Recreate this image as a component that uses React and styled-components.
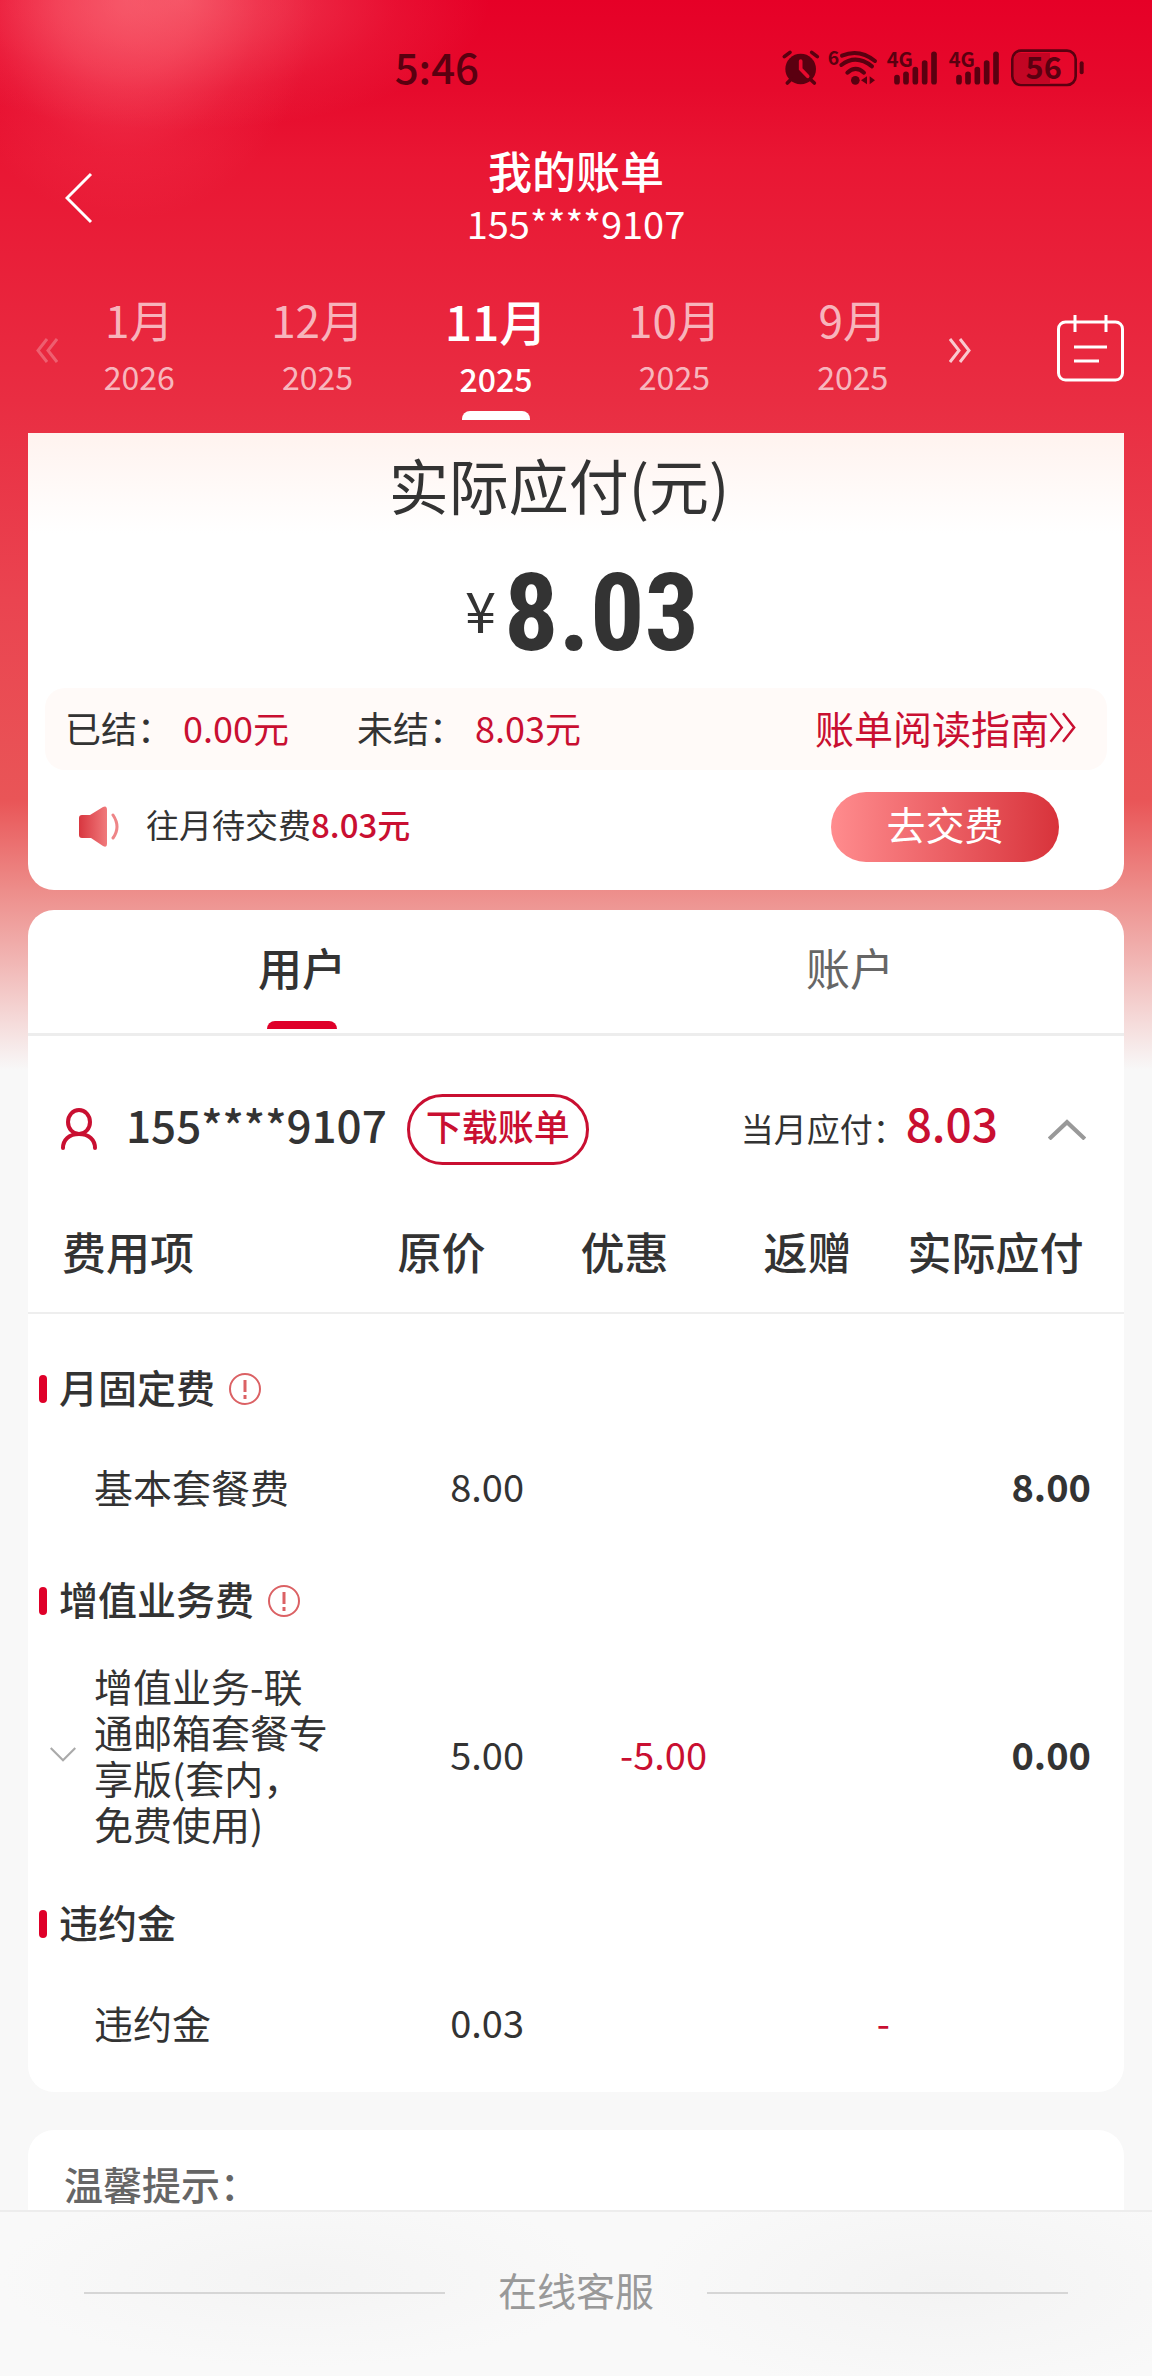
import React, { useState } from 'react';
import styled, { createGlobalStyle } from 'styled-components';

const color = {
  red: '#c90f31',
  brand: '#df0029',
  text: '#333333',
  muted: '#666666',
  hint: '#999999',
  line: '#eeeeee',
  page: '#f8f8f8',
  status: '#5a0010',
};

const GlobalStyle = createGlobalStyle`
  * {
    box-sizing: border-box;
  }

  body {
    margin: 0;
    color: ${color.text};
    background: ${color.page};
    font-family: 'Noto Sans CJK SC', 'Noto Sans', sans-serif;
    font-size: 39px;
  }

  button {
    padding: 0;
    border: 0;
    background: none;
    color: inherit;
    font: inherit;
    cursor: pointer;
  }

  a {
    color: inherit;
    text-decoration: none;
  }

  svg {
    display: block;
  }
`;

const Page = styled.div`
  display: flex;
  flex-direction: column;
  min-height: 100vh;
  background:
    radial-gradient(
      ellipse 310px 130px at 180px 0,
      rgba(255, 150, 150, 0.4) 0,
      rgba(255, 145, 145, 0.28) 35%,
      rgba(255, 140, 140, 0.1) 70%,
      rgba(255, 140, 140, 0) 100%
    ) no-repeat,
    radial-gradient(
      ellipse 190px 220px at 125px 0,
      rgba(255, 110, 125, 0.5) 0,
      rgba(255, 105, 120, 0.38) 35%,
      rgba(255, 100, 115, 0.12) 70%,
      rgba(255, 95, 110, 0) 100%
    ) no-repeat,
    linear-gradient(
      180deg,
      #e60027 0,
      #e60a2c 90px,
      #e91633 160px,
      #e92d42 400px,
      #ea4450 600px,
      #e95557 800px,
      #ed8d8a 890px,
      #f1b5b3 960px,
      #f8f8f8 1070px
    ) no-repeat;
`;

const StatusBar = styled.div`
  display: flex;
  align-items: center;
  justify-content: space-between;
  height: 134px;
  padding: 0 65px 0 34%;
  color: ${color.status};
  font-size: 42px;
  font-weight: 500;

  span {
    padding: 0 0 4px 3px;
  }
`;

const Header = styled.header`
  display: grid;
  grid-template-columns: 102px 1fr 102px;
  align-items: center;
  padding: 6px 28px 0;
  color: white;
  text-align: center;
`;

const BackButton = styled.button`
  display: flex;
  justify-content: center;
  padding-top: 10px;
`;

const Title = styled.h1`
  margin: 0;
  font-size: 44px;
  font-weight: 500;
  line-height: 60px;
`;

const HeaderPhone = styled.div`
  font-size: 38px;
  line-height: 46px;
`;

const MonthBar = styled.nav`
  display: flex;
  align-items: flex-start;
  padding: 46px 28px 13px 36px;
  color: white;
`;

const ArrowButton = styled.button`
  display: flex;
  align-items: center;
  height: 116px;
  opacity: ${({ $dim }) => ($dim ? 0.25 : 0.75)};
  margin: ${({ $dim }) => ($dim ? '0 -8px 0 0' : '0 86px 0 7px')};
`;

const CalendarButton = styled.button`
  display: flex;
  align-items: center;
  height: 112px;
`;

const Months = styled.div`
  display: grid;
  grid-template-columns: repeat(5, 1fr);
  flex: 1;
`;

const Month = styled.button`
  display: flex;
  flex-direction: column;
  align-items: center;
  height: 128px;
  color: ${({ $active }) => ($active ? 'white' : 'rgba(255, 255, 255, 0.68)')};
  font-size: ${({ $active }) => ($active ? '48px' : '44px')};
  font-weight: ${({ $active }) => ($active ? 500 : 400)};
  line-height: ${({ $active }) => ($active ? '56px' : '54px')};

  small {
    font-size: 32px;
    line-height: 60px;
  }

  &::after {
    content: '';
    width: 68px;
    height: 9px;
    margin-top: auto;
    border-radius: 8px 8px 0 0;
    background: ${({ $active }) => ($active ? 'white' : 'transparent')};
  }
`;

const Main = styled.main`
  display: flex;
  flex: 1;
  flex-direction: column;
  padding: 0 28px;
`;

const Card = styled.section`
  border-radius: 26px;
  background: white;
`;

const SummaryCard = styled(Card)`
  margin-bottom: 20px;
  padding-top: 12px;
  border-radius: 0 0 26px 26px;
  background: linear-gradient(180deg, #fff3ef 0, #ffffff 100px);
`;

const SummaryTitle = styled.h2`
  margin: 0;
  padding-right: 34px;
  font-size: 60px;
  font-weight: 400;
  line-height: 78px;
  text-align: center;
`;

const Amount = styled.div`
  display: flex;
  align-items: center;
  justify-content: center;
  gap: 8px;
  height: 165px;
  padding: 14px 0 0 12px;
  font-size: 56px;

  span {
    padding-bottom: 8px;
  }

  strong {
    font-family: 'Roboto Condensed', 'Open Sans Condensed', 'Noto Sans Condensed', 'Roboto', sans-serif;
    font-size: 108px;
    line-height: 120px;
  }
`;

const SettleBar = styled.div`
  display: flex;
  align-items: center;
  justify-content: space-between;
  height: 82px;
  margin: 0 17px;
  padding: 0 30px 4px 20px;
  border-radius: 20px;
  background: #fffaf8;
  font-size: 36px;
`;

const SettleItems = styled.div`
  display: flex;
  gap: 68px;
`;

const Red = styled.span`
  color: ${color.red};
`;

const Colon = styled.span`
  padding-right: 10px;
`;

const GuideLink = styled.a`
  display: flex;
  align-items: center;
  color: ${color.red};
  font-size: 39px;
`;

const NoticeRow = styled.div`
  display: flex;
  align-items: center;
  padding: 22px 65px 28px 51px;
  font-size: 33px;

  ${Red} {
    font-weight: 500;
  }
`;

const NoticeText = styled.p`
  flex: 1;
  margin: 0 0 0 27px;
  padding-bottom: 6px;
`;

const PayButton = styled.button`
  width: 228px;
  height: 70px;
  padding-bottom: 8px;
  border-radius: 35px;
  background: linear-gradient(90deg, #ff8c8e, #d8333b);
  color: white;
  font-size: 39px;
`;

const BillCard = styled(Card)`
  margin-bottom: 38px;
  overflow: hidden;
`;

const Tabs = styled.div`
  display: grid;
  grid-template-columns: 1fr 1fr;
  border-bottom: 3px solid #ededed;
`;

const Tab = styled.button`
  position: relative;
  height: 123px;
  padding-bottom: 10px;
  color: ${({ $active }) => ($active ? color.text : color.muted)};
  font-size: 44px;
  font-weight: ${({ $active }) => ($active ? 500 : 400)};

  &::after {
    content: '';
    position: absolute;
    bottom: 4px;
    left: calc(50% - 35px);
    width: 70px;
    height: 8px;
    border-radius: 8px 8px 0 0;
    background: ${({ $active }) => ($active ? color.brand : 'transparent')};
  }
`;

const UserRow = styled.div`
  display: flex;
  align-items: center;
  padding: 56px 38px 30px 32px;
`;

const UserPhone = styled.div`
  margin: 0 20px 0 28px;
  padding-bottom: 10px;
  font-size: 44px;
  font-weight: 500;
`;

const DownloadButton = styled.button`
  width: 182px;
  height: 71px;
  padding-bottom: 8px;
  border: 3px solid ${color.red};
  border-radius: 36px;
  color: ${color.red};
  font-size: 36px;
  font-weight: 500;
`;

const MonthDue = styled.div`
  display: flex;
  align-items: center;
  margin-left: auto;
  padding-bottom: 2px;
  font-size: 33px;

  strong {
    padding-bottom: 12px;
    color: ${color.red};
    font-size: 46px;
    font-weight: 500;
    line-height: 60px;
  }
`;

const CollapseButton = styled.button`
  margin-left: 50px;
`;

const FeeTable = styled.table`
  width: 100%;
  table-layout: fixed;
  border-collapse: collapse;
  line-height: 46px;

  col {
    width: 183px;
  }

  col:first-child {
    width: auto;
  }

  col:last-child {
    width: 225px;
  }

  thead th {
    height: 117px;
    padding: 0 0 6px;
    border-bottom: 2px solid ${color.line};
    font-size: 44px;
    font-weight: 500;
    white-space: nowrap;
  }

  thead th:first-child {
    padding-left: 34px;
    text-align: left;
  }

  thead th:last-child {
    padding-right: 32px;
  }

  tbody:first-of-type th {
    height: 120px;
    padding-top: 30px;
  }
`;

const SectionCell = styled.th`
  height: 90px;
  padding: 0 11px;
  font-weight: 500;
  text-align: left;
`;

const SectionTitle = styled.div`
  display: flex;
  align-items: center;

  &::before {
    content: '';
    width: 8px;
    height: 28px;
    margin-right: 12px;
    border-radius: 4px;
    background: ${color.brand};
  }

  span {
    padding-bottom: 6px;
  }

  svg {
    margin-left: 13px;
  }
`;

const Cell = styled.td`
  height: 123px;
  padding: 16px 9px 33px 0;
  color: ${({ $red }) => ($red ? color.red : color.text)};
  font-size: 38px;
  text-align: right;

  &:last-child {
    padding-right: 33px;
    font-weight: 700;
  }
`;

const NameCell = styled(Cell)`
  padding-left: 22px;
  font-size: 39px;
  text-align: left;
`;

const FeeName = styled.div`
  display: grid;
  grid-template-columns: 44px 236px;
  align-items: center;
`;

const TipsCard = styled(Card)`
  flex: 1;
  padding: 27px 36px 180px;
  border-radius: 26px 26px 0 0;
  color: ${color.muted};
  font-weight: 500;
  line-height: 52px;
`;

const Footer = styled.footer`
  position: fixed;
  right: 0;
  bottom: 0;
  left: 0;
  display: flex;
  align-items: center;
  gap: 53px;
  height: 166px;
  padding: 0 84px 2px;
  border-top: 2px solid #ededed;
  background:
    radial-gradient(ellipse 300px 90px at 26% 40%, #f4f4f4, rgba(244, 244, 244, 0)),
    radial-gradient(ellipse 300px 110px at 82% 45%, #f3f3f3, rgba(243, 243, 243, 0)),
    #f9f9f9;
  color: ${color.hint};

  a {
    padding-bottom: 8px;
  }

  &::before,
  &::after {
    content: '';
    flex: 1;
    height: 2px;
    background: #d6d6d6;
  }
`;

const signalBars = [
  [411, 134, 162],
  [438, 124, 162],
  [466, 110, 162],
  [494, 90, 162],
  [522, 64, 162],
];

function Signal({ x }) {
  return (
    <g transform={`translate(${x} 0)`}>
      <text x="380" y="110" fontSize="60" fontWeight="700" fontFamily="Noto Sans CJK SC, sans-serif">4G</text>
      <g stroke="currentColor" strokeWidth="17" strokeLinecap="round">
        {signalBars.map(([bx, top, bottom]) => (
          <path key={bx} d={`M${bx} ${top + 8}V${bottom - 8}`} />
        ))}
      </g>
    </g>
  );
}

function StatusIcons() {
  return (
    <svg width="307" height="80" viewBox="60 -10 921 240" fill="currentColor">
      <circle cx="122" cy="116" r="46" />
      <path d="M73 79 90 66M172 79 155 66M94 146 82 158M150 146 163 158" stroke="currentColor" strokeWidth="11" strokeLinecap="round" />
      <path d="M122 92V116L143 138" fill="none" stroke="#e8092d" strokeWidth="11" strokeLinecap="round" />
      <text x="203" y="105" fontSize="58" fontWeight="700" fontFamily="Noto Sans CJK SC, sans-serif">6</text>
      <g fill="none" stroke="currentColor" strokeWidth="12" strokeLinecap="round">
        <path d="M246 76Q298 54 345 92M244 104Q288 70 336 108M262 127Q287 104 312 127" />
      </g>
      <circle cx="286" cy="150" r="13" />
      <path d="M303 150 321 138V162ZM329 138 345 150 329 162Z" />
      <Signal x={0} />
      <Signal x={186} />
      <path d="M782 68H870V158H782Q762 158 762 138V88Q762 68 782 68Z" opacity="0.25" />
      <rect x="757" y="61" width="190" height="103" rx="26" fill="none" stroke="currentColor" strokeWidth="8" />
      <path d="M965 99V126" stroke="currentColor" strokeWidth="12" strokeLinecap="round" />
      <text x="851" y="146" fontSize="92" fontWeight="700" textAnchor="middle" fontFamily="Noto Sans CJK SC, sans-serif">56</text>
    </svg>
  );
}

function BackIcon() {
  return (
    <svg width="28" height="52" viewBox="0 0 28 52" fill="none" stroke="currentColor" strokeWidth="3">
      <path d="M26 2 2 26l24 24" />
    </svg>
  );
}

function DoubleChevron({ left, size = 22 }) {
  return (
    <svg width={size} height={size + 3} viewBox="0 0 22 25" fill="none" stroke="currentColor" strokeWidth={size > 22 ? 2 : 3}>
      <path d={left ? 'M11 1 2 12.5 11 24M21 1 12 12.5 21 24' : 'M1 1 10 12.5 1 24M11 1 20 12.5 11 24'} />
    </svg>
  );
}

function CalendarIcon() {
  return (
    <svg width="67" height="67" viewBox="0 0 67 67" fill="none" stroke="currentColor" strokeWidth="3">
      <rect x="1.5" y="7" width="64" height="58" rx="7" />
      <path d="M18 0v17M49 0v17M17 32h33M17 46h25" />
    </svg>
  );
}

function SpeakerIcon() {
  return (
    <svg width="40" height="42" viewBox="0 0 40 42">
      <defs>
        <linearGradient id="horn" x1="0" x2="1">
          <stop offset="0" stopColor="#d8363f" />
          <stop offset="1" stopColor="#f07a7c" />
        </linearGradient>
      </defs>
      <path d="M0 12Q0 9 3 9H11L24 1Q28-1 28 4V38Q28 42 24 40L12 32H3Q0 32 0 29Z" fill="url(#horn)" />
      <path d="M34 9Q42 21 34 32" fill="none" stroke="#ee8587" strokeWidth="3" strokeLinecap="round" />
    </svg>
  );
}

function UserIcon() {
  return (
    <svg width="38" height="42" viewBox="0 0 38 42" fill="none" stroke={color.red} strokeWidth="4" strokeLinecap="round">
      <ellipse cx="19" cy="14" rx="11" ry="12" />
      <path d="M3 40C3 32 9 26 19 26S35 32 35 40" />
    </svg>
  );
}

function Chevron({ up, width, height }) {
  return (
    <svg width={width} height={height} viewBox="0 0 36 20" fill="none" stroke={up ? '#999999' : '#aaaaaa'} strokeWidth={up ? 4 : 3}>
      <path d={up ? 'M1 19 18 3l17 16' : 'M1 1l17 17L35 1'} />
    </svg>
  );
}

function InfoIcon() {
  return (
    <svg width="34" height="34" viewBox="0 0 34 34" fill="none" stroke="#db6164" strokeWidth="2">
      <circle cx="17" cy="17" r="15" />
      <path d="M17 8v12M17 23v4" strokeWidth="3" />
    </svg>
  );
}

const months = [
  { month: '1月', year: '2026' },
  { month: '12月', year: '2025' },
  { month: '11月', year: '2025' },
  { month: '10月', year: '2025' },
  { month: '9月', year: '2025' },
];

const sections = [
  {
    title: '月固定费',
    info: true,
    rows: [{ name: '基本套餐费', price: '8.00', total: '8.00' }],
  },
  {
    title: '增值业务费',
    info: true,
    rows: [
      {
        name: '增值业务-联通邮箱套餐专享版(套内，免费使用)',
        price: '5.00',
        discount: '-5.00',
        total: '0.00',
        expandable: true,
      },
    ],
  },
  {
    title: '违约金',
    rows: [{ name: '违约金', price: '0.03', refund: '-' }],
  },
];

function MonthPicker() {
  const [selected, setSelected] = useState(2);

  return (
    <MonthBar>
      <ArrowButton $dim aria-label="后几月">
        <DoubleChevron left />
      </ArrowButton>
      <Months>
        {months.map(({ month, year }, i) => (
          <Month key={month} $active={i === selected} onClick={() => setSelected(i)}>
            {month}
            <small>{year}</small>
          </Month>
        ))}
      </Months>
      <ArrowButton aria-label="前几月">
        <DoubleChevron />
      </ArrowButton>
      <CalendarButton aria-label="选择月份">
        <CalendarIcon />
      </CalendarButton>
    </MonthBar>
  );
}

function Summary() {
  return (
    <SummaryCard>
      <SummaryTitle>实际应付(元)</SummaryTitle>
      <Amount>
        <span>¥</span>
        <strong>8.03</strong>
      </Amount>
      <SettleBar>
        <SettleItems>
          <div><Colon>已结：</Colon><Red>0.00元</Red></div>
          <div><Colon>未结：</Colon><Red>8.03元</Red></div>
        </SettleItems>
        <GuideLink href="#guide">
          账单阅读指南
          <DoubleChevron size={28} />
        </GuideLink>
      </SettleBar>
      <NoticeRow>
        <SpeakerIcon />
        <NoticeText>往月待交费<Red>8.03元</Red></NoticeText>
        <PayButton>去交费</PayButton>
      </NoticeRow>
    </SummaryCard>
  );
}

function Fees() {
  return (
    <FeeTable>
      <colgroup>
        <col />
        <col />
        <col />
        <col />
        <col />
      </colgroup>
      <thead>
        <tr>
          <th>费用项</th>
          <th>原价</th>
          <th>优惠</th>
          <th>返赠</th>
          <th>实际应付</th>
        </tr>
      </thead>
      {sections.map(({ title, info, rows }) => (
        <tbody key={title}>
          <tr>
            <SectionCell colSpan={5}>
              <SectionTitle>
                <span>{title}</span>
                {info && <InfoIcon />}
              </SectionTitle>
            </SectionCell>
          </tr>
          {rows.map(row => (
            <tr key={row.name}>
              <NameCell>
                <FeeName>
                  <span>{row.expandable && <Chevron width={26} height={15} />}</span>
                  {row.name}
                </FeeName>
              </NameCell>
              <Cell>{row.price}</Cell>
              <Cell $red>{row.discount}</Cell>
              <Cell $red>{row.refund}</Cell>
              <Cell>{row.total}</Cell>
            </tr>
          ))}
        </tbody>
      ))}
    </FeeTable>
  );
}

function App() {
  const [tab, setTab] = useState('用户');

  return (
    <Page>
      <GlobalStyle />
      <StatusBar>
        <span>5:46</span>
        <StatusIcons />
      </StatusBar>
      <Header>
        <BackButton aria-label="返回">
          <BackIcon />
        </BackButton>
        <div>
          <Title>我的账单</Title>
          <HeaderPhone>155****9107</HeaderPhone>
        </div>
      </Header>
      <MonthPicker />
      <Main>
        <Summary />
        <BillCard>
          <Tabs>
            {['用户', '账户'].map(name => (
              <Tab key={name} $active={tab === name} onClick={() => setTab(name)}>
                {name}
              </Tab>
            ))}
          </Tabs>
          <UserRow>
            <UserIcon />
            <UserPhone>155****9107</UserPhone>
            <DownloadButton>下载账单</DownloadButton>
            <MonthDue>
              当月应付：<strong>8.03</strong>
            </MonthDue>
            <CollapseButton aria-label="收起">
              <Chevron up width={38} height={21} />
            </CollapseButton>
          </UserRow>
          <Fees />
        </BillCard>
        <TipsCard>温馨提示：</TipsCard>
      </Main>
      <Footer>
        <a href="#service">在线客服</a>
      </Footer>
    </Page>
  );
}

export default App;
